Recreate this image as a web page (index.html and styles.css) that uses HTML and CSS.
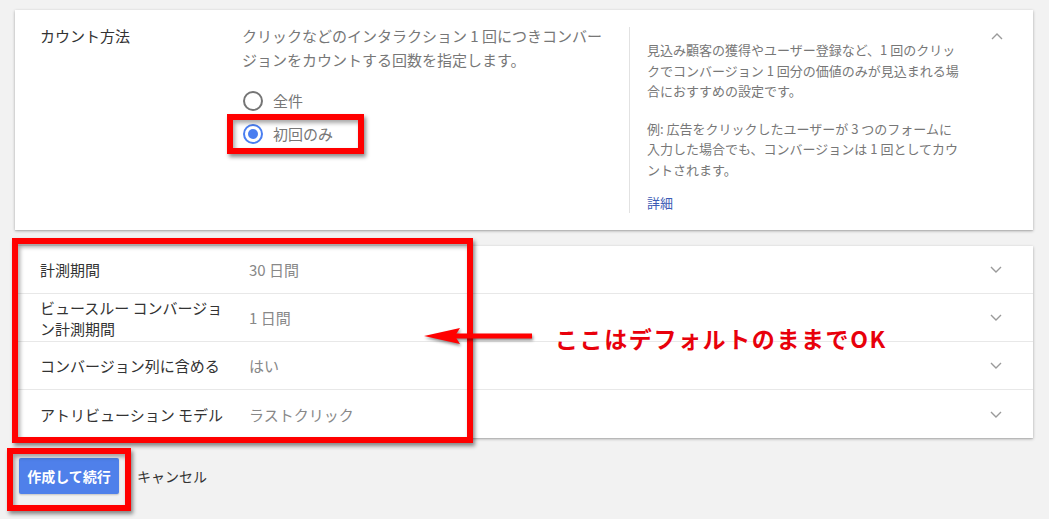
FILE: index.html
```html
<!DOCTYPE html>
<html lang="ja">
<head>
<meta charset="utf-8">
<title>コンバージョン設定</title>
<link rel="stylesheet" href="styles.css">
</head>
<body>
<div class="page">
  <section class="card card-open">
    <div class="label">カウント方法</div>
    <div class="main">
      <p class="desc">クリックなどのインタラクション 1 回につきコンバー<br>ジョンをカウントする回数を指定します。</p>
      <div class="radios">
        <div class="radio-row"><span class="radio"></span><span class="radio-label">全件</span></div>
        <div class="radio-row"><span class="radio radio-on"></span><span class="radio-label">初回のみ</span></div>
      </div>
    </div>
    <div class="help">
      <p class="help-p">見込み顧客の獲得やユーザー登録など、1 回のクリッ<br>クでコンバージョン 1 回分の価値のみが見込まれる場<br>合におすすめの設定です。</p>
      <p class="help-p">例: 広告をクリックしたユーザーが 3 つのフォームに<br>入力した場合でも、コンバージョンは 1 回としてカウ<br>ントされます。</p>
      <a class="help-link">詳細</a>
    </div>
    <div class="toggle">
      <svg class="chev" viewBox="0 0 12 7" width="12" height="7"><polyline points="1,6 6,1 11,6"/></svg>
    </div>
  </section>

  <section class="card card-rows">
    <div class="row">
      <div class="row-label">計測期間</div>
      <div class="row-value">30 日間</div>
      <svg class="chev" viewBox="0 0 12 7" width="12" height="7"><polyline points="1,1 6,6 11,1"/></svg>
    </div>
    <div class="row">
      <div class="row-label two">ビュースルー コンバージョ<br>ン計測期間</div>
      <div class="row-value">1 日間</div>
      <svg class="chev" viewBox="0 0 12 7" width="12" height="7"><polyline points="1,1 6,6 11,1"/></svg>
    </div>
    <div class="row">
      <div class="row-label">コンバージョン列に含める</div>
      <div class="row-value">はい</div>
      <svg class="chev" viewBox="0 0 12 7" width="12" height="7"><polyline points="1,1 6,6 11,1"/></svg>
    </div>
    <div class="row">
      <div class="row-label">アトリビューション モデル</div>
      <div class="row-value">ラストクリック</div>
      <svg class="chev" viewBox="0 0 12 7" width="12" height="7"><polyline points="1,1 6,6 11,1"/></svg>
    </div>
  </section>

  <div class="actions">
    <button class="btn-primary">作成して続行</button>
    <span class="btn-cancel">キャンセル</span>
  </div>

  <div class="mark mark-radio"></div>
  <div class="mark mark-rows"></div>
  <div class="mark mark-btn"></div>
  <svg class="arrow" viewBox="0 0 115 22" width="115" height="22">
    <polygon points="4,11 40,3 35,11 40,19" />
    <rect x="34" y="8.5" width="78" height="5" />
  </svg>
  <div class="note">ここはデフォルトのままでOK</div>
</div>
</body>
</html>
```

FILE: styles.css
```css
* { box-sizing: border-box; }
html, body { margin: 0; padding: 0; }
body {
  background: #f2f2f2;
  font-family: "Noto Sans CJK JP", "Noto Sans", sans-serif;
  color: #333;
  width: 1049px;
  height: 519px;
  overflow: hidden;
}
.page {
  position: relative;
  padding: 10px 16px 0 15px;
  height: 519px;
}
.card {
  background: #fff;
  box-shadow: 0 1px 3px rgba(0,0,0,0.28), 0 1px 1px rgba(0,0,0,0.08);
}
.card-open {
  display: flex;
  height: 220px;
  padding: 14px 0 17px 25px;
  margin-bottom: 16px;
}
.label {
  width: 202px;
  font-size: 15px;
  line-height: 24px;
  color: #333;
}
.main { width: 387px; }
.desc {
  margin: 0;
  font-size: 15px;
  line-height: 24px;
  color: #777;
}
.radios { margin-top: 12px; }
.radio-row {
  display: flex;
  align-items: center;
  height: 33px;
}
.radio {
  width: 20px;
  height: 20px;
  border: 2px solid #757575;
  border-radius: 50%;
  margin-left: 1px;
  position: relative;
}
.radio-on { border-color: #4a7ef0; }
.radio-on::after {
  content: "";
  position: absolute;
  left: 3px; top: 3px;
  width: 10px; height: 10px;
  border-radius: 50%;
  background: #4a7ef0;
}
.radio-label {
  margin-left: 10px;
  font-size: 15px;
  color: #777;
}
.help {
  margin-top: 3px;
  height: 186px;
  border-left: 1px solid #e2e2e2;
  padding: 13px 0 0 17px;
  flex: 1;
}
.help-p {
  margin: 0 0 17px;
  font-size: 13px;
  line-height: 20.5px;
  color: #777;
}
.help-p + .help-p { margin-bottom: 13px; }
.help-link {
  display: block;
  font-size: 13px;
  line-height: 20px;
  color: #3b5bb5;
}
.toggle {
  width: 72px;
  display: flex;
  justify-content: center;
  padding-top: 9px;
}
.chev {
  fill: none;
  stroke: #9a9a9a;
  stroke-width: 1.4;
}
.card-rows { height: 192px; }
.row {
  display: flex;
  align-items: center;
  height: 48px;
  padding-left: 25px;
  border-bottom: 1px solid #e8e8e8;
}
.row:last-child { border-bottom: none; }
.row-label {
  width: 209px;
  font-size: 15px;
  line-height: 21px;
  color: #333;
}
.row-value {
  flex: 1;
  font-size: 15px;
  color: #888;
}
.row .chev { margin-right: 31px; }
.actions {
  display: flex;
  align-items: center;
  margin-top: 20px;
  padding-left: 4px;
}
.btn-primary {
  width: 100px;
  height: 36px;
  border: none;
  border-radius: 2px;
  background: #4f80ea;
  color: #fff;
  font-family: "Noto Sans CJK JP", sans-serif;
  font-size: 14px;
  font-weight: 700;
  padding: 0;
  box-shadow: 0 1px 2px rgba(0,0,0,0.2);
}
.btn-cancel {
  margin-left: 18px;
  font-size: 14px;
  color: #333;
}
.mark {
  position: absolute;
  border: 6px solid #f00;
  box-shadow: 2px 3px 4px rgba(0,0,0,0.45), inset 2px 3px 4px rgba(0,0,0,0.35);
}
.mark-radio { left: 227px; top: 114px; width: 137px; height: 40px; }
.mark-rows { left: 12px; top: 238px; width: 461px; height: 205px; }
.mark-btn { left: 7px; top: 448px; width: 124px; height: 63px; }
.arrow {
  position: absolute;
  left: 420px;
  top: 325px;
  fill: #f00;
  filter: drop-shadow(1px 2px 1.5px rgba(0,0,0,0.45));
}
.note {
  position: absolute;
  left: 555px;
  top: 322px;
  font-size: 23px;
  line-height: 32px;
  font-weight: 700;
  letter-spacing: 1.6px;
  color: #e8000b;
  white-space: nowrap;
}
```
